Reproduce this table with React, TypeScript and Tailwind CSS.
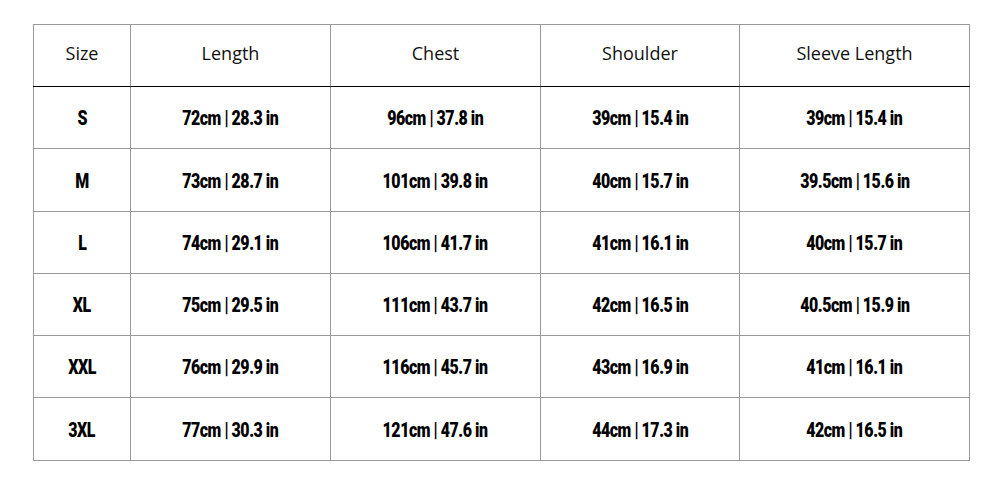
const HEAD = ['Size', 'Length', 'Chest', 'Shoulder', 'Sleeve Length']
const WIDTHS = ['w-[97px]', 'w-[200px]', 'w-[210px]', 'w-[199px]', 'w-[230px]']

const ROWS = [
  ['S', '72cm | 28.3 in', '96cm | 37.8 in', '39cm | 15.4 in', '39cm | 15.4 in'],
  ['M', '73cm | 28.7 in', '101cm | 39.8 in', '40cm | 15.7 in', '39.5cm | 15.6 in'],
  ['L', '74cm | 29.1 in', '106cm | 41.7 in', '41cm | 16.1 in', '40cm | 15.7 in'],
  ['XL', '75cm | 29.5 in', '111cm | 43.7 in', '42cm | 16.5 in', '40.5cm | 15.9 in'],
  ['XXL', '76cm | 29.9 in', '116cm | 45.7 in', '43cm | 16.9 in', '41cm | 16.1 in'],
  ['3XL', '77cm | 30.3 in', '121cm | 47.6 in', '44cm | 17.3 in', '42cm | 16.5 in'],
]

export default function App() {
  return (
    <div className="w-[1007px] h-[485px] bg-white pt-[24px] pl-[33px]">
      <table className="table-fixed border-collapse w-[937px]">
        <thead>
          <tr className="h-[62px]">
            {HEAD.map((h, i) => (
              <th
                key={h}
                className={`${WIDTHS[i]} border border-[#999999] border-b-black pb-[4px] text-center font-normal text-[18px] text-[#111] font-['Open_Sans']`}
              >
                {h}
              </th>
            ))}
          </tr>
        </thead>
        <tbody>
          {ROWS.map((row, r) => (
            <tr key={row[0]} className={r === 1 || r === 5 ? 'h-[63px]' : 'h-[62px]'}>
              {row.map((c, i) => (
                <td key={i} className="border border-[#999999] pt-[3px] text-center">
                  <span className="inline-block scale-x-[0.76] text-[21px] leading-none font-black tracking-[-0.6px] text-black font-['Roboto']">
                    {c}
                  </span>
                </td>
              ))}
            </tr>
          ))}
        </tbody>
      </table>
    </div>
  )
}
